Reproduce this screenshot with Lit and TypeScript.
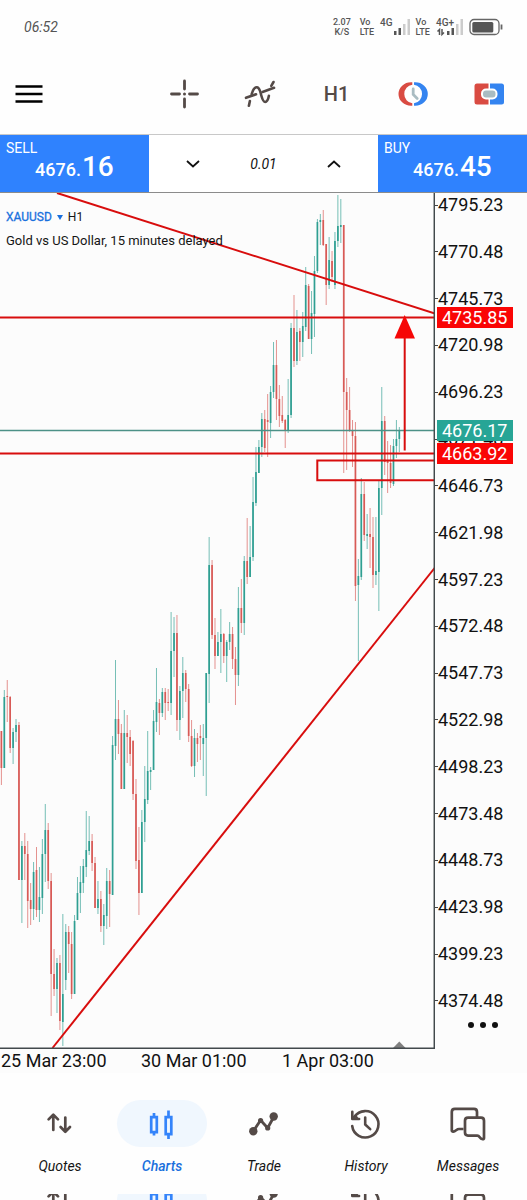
import { LitElement, html, svg, css } from "lit";
import { customElement, state } from "lit/decorators.js";

type Candle = [up: number, high: number, top: number, bottom: number, low: number];

/* Hourly bars: direction (1 rising, 0 falling), wick top, body top, body bottom, wick bottom */
const CANDLES: Candle[] = [
  [0, 731, 731, 768, 785], [1, 690, 697, 768, 768], [0, 680, 696, 697, 722], [0, 696, 697, 748, 753],
  [1, 728, 732, 748, 764], [1, 719, 725, 732, 742], [0, 722, 725, 880, 880], [1, 841, 846, 880, 923],
  [0, 833, 846, 854, 880], [0, 841, 854, 901, 928], [0, 883, 900, 909, 925], [1, 862, 872, 909, 920],
  [0, 847, 870, 910, 917], [1, 867, 897, 910, 922], [1, 839, 854, 898, 914], [1, 804, 830, 854, 882],
  [0, 823, 830, 881, 889], [0, 873, 881, 974, 1016], [0, 949, 974, 989, 996], [1, 958, 963, 989, 1013],
  [0, 955, 963, 1021, 1030], [1, 914, 994, 1022, 1046], [1, 924, 932, 980, 990], [0, 926, 932, 944, 973],
  [0, 932, 944, 994, 999], [1, 915, 921, 994, 994], [1, 877, 893, 920, 920], [1, 866, 882, 893, 913],
  [1, 859, 866, 883, 893], [1, 811, 850, 867, 877], [1, 816, 841, 851, 855], [0, 834, 841, 863, 871],
  [0, 857, 863, 908, 908], [1, 881, 899, 908, 914], [0, 891, 899, 926, 932], [1, 904, 915, 926, 945],
  [1, 868, 881, 916, 929], [0, 870, 881, 894, 927], [1, 736, 745, 895, 895], [1, 660, 719, 746, 760],
  [0, 700, 719, 734, 754], [0, 724, 733, 789, 789], [1, 710, 733, 789, 789], [0, 715, 733, 737, 763],
  [0, 730, 737, 754, 766], [0, 740, 741, 794, 800], [0, 779, 794, 861, 869], [0, 827, 860, 893, 915],
  [1, 810, 822, 893, 893], [1, 766, 799, 822, 842], [1, 731, 771, 800, 804], [1, 767, 770, 772, 790],
  [1, 710, 721, 770, 770], [1, 668, 702, 722, 732], [0, 699, 703, 713, 735], [1, 688, 692, 713, 717],
  [0, 688, 692, 703, 720], [0, 689, 702, 703, 711], [1, 612, 651, 703, 715], [1, 617, 633, 651, 677],
  [0, 615, 633, 720, 731], [1, 686, 691, 720, 740], [1, 657, 673, 691, 718], [0, 670, 673, 689, 702],
  [0, 684, 689, 736, 742], [0, 720, 736, 766, 767], [1, 729, 738, 766, 777], [0, 733, 738, 744, 762],
  [0, 725, 736, 738, 760], [1, 724, 738, 744, 776], [1, 673, 673, 738, 796], [1, 537, 565, 674, 703],
  [0, 560, 565, 635, 639], [0, 618, 635, 656, 669], [1, 632, 642, 656, 656], [1, 609, 634, 642, 673],
  [0, 633, 634, 656, 663], [1, 640, 642, 656, 682], [1, 622, 634, 642, 650], [0, 627, 634, 659, 669],
  [0, 647, 659, 675, 705], [1, 587, 608, 675, 686], [0, 579, 608, 623, 633], [1, 556, 561, 623, 635],
  [0, 518, 561, 577, 584], [1, 526, 557, 577, 577], [1, 477, 502, 557, 561], [1, 447, 472, 503, 506],
  [1, 440, 447, 473, 473], [1, 413, 419, 447, 457], [0, 410, 419, 448, 452], [0, 394, 420, 422, 457],
  [1, 386, 392, 423, 438], [1, 342, 365, 392, 398], [0, 340, 365, 399, 420], [0, 385, 399, 416, 427],
  [0, 396, 415, 421, 423], [0, 419, 420, 430, 448], [1, 379, 415, 430, 433], [1, 323, 328, 415, 418],
  [0, 295, 328, 361, 367], [1, 310, 332, 361, 365], [0, 328, 331, 342, 361], [1, 312, 326, 342, 357],
  [1, 267, 285, 327, 331], [0, 284, 286, 339, 339], [1, 291, 313, 339, 354], [1, 256, 271, 314, 337],
  [1, 219, 222, 271, 273], [1, 214, 220, 222, 245], [0, 210, 220, 245, 246], [0, 244, 244, 285, 305],
  [1, 237, 260, 285, 289], [0, 251, 261, 277, 282], [1, 232, 241, 285, 289], [1, 195, 226, 241, 247],
  [1, 199, 225, 227, 243], [0, 225, 225, 392, 473], [0, 378, 392, 410, 470], [0, 387, 410, 430, 432],
  [0, 420, 431, 436, 467], [0, 422, 436, 586, 601], [1, 559, 576, 585, 661], [1, 478, 494, 577, 580],
  [0, 482, 494, 535, 541], [1, 514, 534, 536, 549], [0, 508, 534, 537, 568], [0, 517, 537, 575, 588],
  [1, 517, 571, 575, 585], [1, 480, 488, 572, 611], [1, 387, 421, 488, 515], [0, 416, 421, 462, 475],
  [0, 441, 461, 463, 493], [0, 445, 463, 483, 488], [1, 439, 446, 484, 486], [1, 420, 439, 446, 458],
  [1, 427, 431, 439, 452],
];

const FIRST_X = 1.4;
const STEP_X = 2.926;

const PRICES = [
  "4795.23", "4770.48", "4745.73", "4720.98", "4696.23", "4671.48", "4646.73", "4621.98", "4597.23",
  "4572.48", "4547.73", "4522.98", "4498.23", "4473.48", "4448.73", "4423.98", "4399.23", "4374.48",
];

const navIcons: Record<string, unknown> = {
  Quotes: svg`<g fill="none" stroke="currentColor" stroke-width="2.7" stroke-linecap="round" stroke-linejoin="round">
    <path d="M13.3 26V11M8.6 15.4 13.3 10.6 18 15.4M25.3 13.5V27.6M20.6 23 25.3 27.8 30 23"/></g>`,
  Charts: svg`<g fill="none" stroke="currentColor" stroke-width="2.7">
    <path d="M12 9v4M12 28v3.5M26.5 6.500v6.500M26.5 30v5"/><path d="M9.2 13.2h5.6v15H9.2zM23.7 13.2h5.6v17h-5.6z"/></g>`,
  Trade: svg`<g stroke="currentColor" stroke-width="2.8" stroke-linecap="round" stroke-linejoin="round">
    <path fill="none" d="M9.300 27.200 16.600 16.200 23.700 24 30 12.500"/>
    <g fill="currentColor" stroke="none"><circle cx="9.300" cy="27.200" r="4.2"/><circle cx="16.600" cy="16.500" r="2.600"/>
    <circle cx="23.700" cy="24" r="2.600"/><circle cx="29.700" cy="12.500" r="4.2"/></g></g>`,
  History: svg`<g fill="none" stroke="currentColor" stroke-width="2.6" stroke-linecap="round" stroke-linejoin="round">
    <path d="M6.200 22a13.2 13.2 0 1 0 2.2-9.2"/><path d="M6.300 7.800v7.200h6.8"/><path d="M19.2 13.5v7l5 4.6"/>
    <path stroke-width="2" d="M7.3 14.2 9.5 11.5l2 3z"/></g>`,
  Messages: svg`<g fill="none" stroke="currentColor" stroke-width="2.7" stroke-linejoin="round">
    <path d="M15.5 25h-4.500c-2.4 0-3.2 2.3-5.8 2.6-.9.1-1.4-.4-1.4-1.2V7.900q0-3 3-3h19.200q3 0 3 3v5.500"/>
    <path d="M20 13.700h13q3 0 3 3v17.200c0 1-.5 1.4-1.4 1.3-3.4-.4-2.4-3.6-5.4-3.6h-9.2q-3 0-3-3V16.700q0-3 3-3z"/></g>`,
};

@customElement("nav-icon")
export class NavIcon extends LitElement {
  static properties = { name: { type: String } };
  declare name: string;
  static styles = css`
    :host { display: block; width: 40px; height: 40px; }
    svg { display: block; width: 100%; height: 100%; overflow: visible; }
  `;
  render() {
    return html`<svg viewBox="0 0 40 40" aria-hidden="true">${navIcons[this.name]}</svg>`;
  }
}

@customElement("price-chart")
export class PriceChart extends LitElement {
  static styles = css`
    :host { display: block; position: relative; }
    svg { display: block; width: 100%; height: 856px; }
    .rise { stroke: #2f9f92; }
    .fall { stroke: #d85a56; }
    .wick { stroke-width: 1; opacity: 0.65; }
    .body { stroke-width: 1.7; }
    .level { stroke: #d80d0d; stroke-width: 2; fill: none; }
    .caption { position: absolute; top: 12px; left: 6px; color: #151515; }
    .symbol { display: flex; align-items: center; gap: 5px; font-size: 12px; line-height: 24px; }
    .symbol button { display: flex; align-items: center; gap: 5px; padding: 0; border: 0; background: none;
      font: inherit; font-size: 12px; color: #1a70dd; -webkit-text-stroke: 0.3px; }
    .arrow { border: 3px solid transparent; border-top: 5px solid #1a70dd; border-bottom: 0; }
    .about { font-size: 13px; line-height: 24px; white-space: nowrap; }
  `;

  private candle([up, high, top, bottom, low]: Candle, i: number) {
    const x = FIRST_X + i * STEP_X;
    const tone = up ? "rise" : "fall";
    return svg`<path class="wick ${tone}" d="M${x} ${high}V${low}"/><path class="body ${tone}" d="M${x} ${top}V${bottom}"/>`;
  }

  render() {
    return html`
      <svg viewBox="0 193 435 856" preserveAspectRatio="none" role="img" aria-label="XAUUSD hourly candles">
        ${CANDLES.map((c, i) => this.candle(c, i))}
        <path d="M0 430.5H435" stroke="#4c9187" stroke-width="1.3" />
        <g class="level">
          <path d="M57 193 435 313.5" />
          <path d="M52.5 1048 435 567.5" />
          <path d="M0 317.5H435M0 453.5H435" />
          <path d="M436 460.5H317.3V480.3H436" />
          <path d="M404.7 450.5V336" />
        </g>
        <path d="M404.7 315 415 338.5H394.5z" fill="#f60606" />
        <path d="M393 1048l6.3-6.5 6.3 6.5z" fill="#808080" />
        <path d="M434.3 193V1048.3H0" fill="none" stroke="#42494c" stroke-width="1.5" />
      </svg>
      <div class="caption">
        <div class="symbol"><button>XAUUSD <span class="arrow"></span></button><span>H1</span></div>
        <div class="about">Gold vs US Dollar, 15 minutes delayed</div>
      </div>
    `;
  }
}

@customElement("app-root")
export class AppRoot extends LitElement {
  @state() private tab = "Charts";

  static styles = css`
    :host { display: block; background: #fefefe; color: #111; font-family: Roboto, "Noto Sans", sans-serif; overflow: hidden; }
    * { box-sizing: border-box; }
    button { padding: 0; border: 0; background: none; color: inherit; font: inherit; }
    .status { display: flex; align-items: center; justify-content: space-between; height: 54px; padding: 0 24px; color: #555; }
    .clock { font-size: 14px; font-style: italic; line-height: 20px; }
    .signals { display: flex; align-items: center; gap: 6px; }
    .stack { display: grid; justify-items: center; font-size: 9px; line-height: 10px; font-weight: 500; }
    .rate { padding-right: 3px; }
    .volte { justify-items: start; }
    .signals svg { display: block; }
    .network { display: flex; align-items: flex-start; }
    .network small { font-size: 10px; line-height: 10px; font-weight: 500; }
    .plus svg { margin-left: -8px; overflow: visible; }
    .tools { display: flex; align-items: center; justify-content: space-between; height: 80px; padding: 0 20px 0 11px; color: #544a47; }
    .tools button { display: grid; place-items: center; width: 36px; height: 36px; }
    .group { display: flex; justify-content: space-between; width: 341px; }
    .tools .frame { font-size: 20px; font-weight: 500; }
    .deal { display: grid; grid-template-columns: 149px 1fr 149px; height: 59px; border-top: 1px solid #c8c8c8; border-bottom: 1px solid #8b8b8b; background: #fff; }
    .quote { display: flex; flex-direction: column; padding: 4px 6px; background: #2f82fe; color: #fff; text-align: left; }
    .side { font-size: 14px; line-height: 18px; }
    .amount { display: flex; align-items: baseline; padding-left: 29px; font-size: 18px; line-height: 18px; font-weight: 500; }
    .amount b { padding-left: 1px; font-size: 28px; line-height: 20px; font-weight: 500; }
    .deal .quote { line-height: 18px; }
    .volume { display: flex; align-items: center; justify-content: space-between; padding: 0 28px; }
    .volume button { display: grid; place-items: center; width: 32px; height: 40px; }
    .volume input { width: 60px; border: 0; background: none; text-align: center; font: inherit; font-size: 14px; font-style: italic; color: #111; }
    .market { display: flex; background: #fcfcfc; }
    price-chart { flex: 1; min-width: 0; }
    .axis { position: relative; width: 92px; }
    .prices { display: flex; flex-direction: column; justify-content: space-between; height: 820px; margin: 0; padding: 0; list-style: none; }
    .prices li { display: flex; align-items: center; font-size: 18px; line-height: 24px; }
    .prices li::before { content: ""; width: 3px; height: 1px; background: #444; }
    .tag { position: absolute; left: 2px; width: 76px; height: 21px; padding-left: 5px; font-size: 18px; line-height: 21px; color: #fff; background: #fa0505; }
    .target { top: 114px; }
    .entry { top: 250px; }
    .last { top: 227px; background: #27a596; }
    .more { display: flex; gap: 6px; height: 24px; align-items: center; margin-left: 33px; }
    .more i { width: 6px; height: 6px; border-radius: 50%; background: #111; }
    .times { display: grid; grid-template-columns: 140px 141px 1fr; padding-left: 1px; background: #fcfcfc; font-size: 18px; line-height: 24px; }
    .nav { display: grid; grid-template-columns: repeat(5, 1fr); padding: 0 8px 0 9px; }
    .bar { height: 121px; padding-top: 27px; }
    .nav button, .nav .ghost { display: flex; flex-direction: column; align-items: center; color: #544a47; }
    .pill { display: grid; place-items: center; width: 90px; height: 47px; border-radius: 24px; }
    .label { padding-top: 9px; font-size: 14px; line-height: 20px; font-style: italic; color: #151515; }
    .nav .on { color: #3484fa; }
    .on .pill { background: #f0f7fe; }
    .on .label { color: #1a70dd; font-weight: 500; }
    .echo { height: 6px; overflow: hidden; }
    .echo .pill { margin-top: -17px; }
  `;

  private signal(label: string, plus: boolean) {
    return html`<div class="network ${plus ? "plus" : ""}"><small>${label}</small>
      <svg width="17" height="18" viewBox="0 0 17 18">
        <g fill="#555"><rect x="1" y="13" width="2.5" height="4" /><rect x="5.5" y="10" width="2.5" height="7" /></g>
        <g fill="#ccc"><rect x="10" y="6" width="2.5" height="11" /><rect x="14.5" y="1" width="2.5" height="16" /></g>
        ${plus ? svg`<path d="M-6.5 17V11.500l-2 2M-4 11v5.500l2-2" fill="none" stroke="#555" stroke-width="1.5"/>` : ""}
      </svg></div>`;
  }

  render() {
    const tabs = Object.keys(navIcons);
    return html`
      <header>
        <div class="status">
          <time class="clock">06:52</time>
          <div class="signals">
            <div class="stack rate"><span>2.07</span><span>K/S</span></div>
            <div class="stack volte"><span>Vo</span><span>LTE</span></div>
            ${this.signal("4G", false)}
            <div class="stack volte"><span>Vo</span><span>LTE</span></div>
            ${this.signal("4G+", true)}
            <svg width="34" height="18" viewBox="0 0 34 18">
              <rect x="1" y="1.5" width="29" height="15" rx="4" fill="none" stroke="#666" stroke-width="1.3" />
              <rect x="3.3" y="4" width="21" height="10.5" rx="1.5" fill="#555" /><path d="M32.5 6.5v5" stroke="#666" stroke-width="1.8" />
            </svg>
          </div>
        </div>
        <div class="tools">
          <button aria-label="Menu"><svg width="28" height="20" viewBox="0 0 28 20"><path d="M0.5 2.5h27M0.5 10h27M0.5 17.500h27" stroke="#000" stroke-width="2.7" /></svg></button>
          <div class="group">
            <button aria-label="Crosshair"><svg width="32" height="32" viewBox="0 0 32 32"><path d="M16.500 3v8M16.500 21v8M3.500 16h8M21.500 16h8" stroke="currentColor" stroke-width="2.8" stroke-linecap="round" /><circle cx="16.500" cy="16" r="1.5" fill="currentColor" /></svg></button>
            <button aria-label="Indicators"><svg width="36" height="32" viewBox="0 0 36 32"><g fill="none" stroke="currentColor" stroke-width="2.6" stroke-linecap="round" stroke-linejoin="round"><path d="M4 19.800 14 16.300M20.500 14 32 9.800" /><path d="M6.900 27.800 7.900 23M9.700 16C11 11.500 12.800 9 15 9.300C17.800 9.700 18.200 13.500 19.300 17.500S21.300 24 23.200 24C25.500 24 26.300 21 26.900 17.800M29.300 7.800 31.500 4" /></g></svg></button>
            <button class="frame">H1</button>
            <button aria-label="Pending order"><svg width="32" height="32" viewBox="0 0 32 32"><path d="M15.300 4.200H14A12.500 11.800 0 0 0 14 27.800H15.300V25.300A9.400 9.400 0 0 1 15.300 6.700z" fill="#d94b42" /><path d="M17 4.200H18.300A12.500 11.800 0 0 1 18.300 27.800H17V25.300A9.400 9.400 0 0 0 17 6.700z" fill="#3484f0" /><path d="M16.200 11v5.500l4 4" fill="none" stroke="#a9bcc2" stroke-width="2.800" stroke-linecap="round" /></svg></button>
            <button aria-label="One click trading"><svg width="32" height="32" viewBox="0 0 32 32"><path d="M15.500 5.500H4q-2.500 0-2.500 2.500v16q0 2.500 2.500 2.500H15.500z" fill="#d94b42" /><path d="M17 5.500H28.500q2.500 0 2.500 2.500v16q0 2.500-2.500 2.500H17z" fill="#3484f0" /><rect x="9" y="11.500" width="14.500" height="9" rx="4" fill="#a9bcc2" stroke="#fff" stroke-width="2" /></svg></button>
          </div>
        </div>
        <div class="deal">
          <button class="quote"><span class="side">SELL</span><span class="amount">4676.<b>16</b></span></button>
          <div class="volume">
            <button aria-label="Decrease volume"><svg width="16" height="10" viewBox="0 0 16 10"><path d="M2 2l6 5.500L14 2" fill="none" stroke="#111" stroke-width="1.800" /></svg></button>
            <input aria-label="Volume" value="0.01" />
            <button aria-label="Increase volume"><svg width="16" height="10" viewBox="0 0 16 10"><path d="M2 8l6-5.500L14 8" fill="none" stroke="#111" stroke-width="1.800" /></svg></button>
          </div>
          <button class="quote"><span class="side">BUY</span><span class="amount">4676.<b>45</b></span></button>
        </div>
      </header>
      <main>
        <div class="market">
          <price-chart></price-chart>
          <div class="axis">
            <ul class="prices">${PRICES.map((p) => html`<li>${p}</li>`)}</ul>
            <button class="more" aria-label="More"><i></i><i></i><i></i></button>
            <span class="tag target">4735.85</span>
            <span class="tag last">4676.17</span>
            <span class="tag entry">4663.92</span>
          </div>
        </div>
        <div class="times"><span>25 Mar 23:00</span><span>30 Mar 01:00</span><span>1 Apr 03:00</span></div>
      </main>
      <nav class="nav bar">
        ${tabs.map((t) => html`<button class=${t === this.tab ? "on" : ""} @click=${() => (this.tab = t)}>
          <span class="pill"><nav-icon name=${t}></nav-icon></span><span class="label">${t}</span></button>`)}
      </nav>
      <div class="nav echo" aria-hidden="true">
        ${tabs.map((t) => html`<div class="ghost ${t === this.tab ? "on" : ""}"><span class="pill"><nav-icon name=${t}></nav-icon></span></div>`)}
      </div>
    `;
  }
}
